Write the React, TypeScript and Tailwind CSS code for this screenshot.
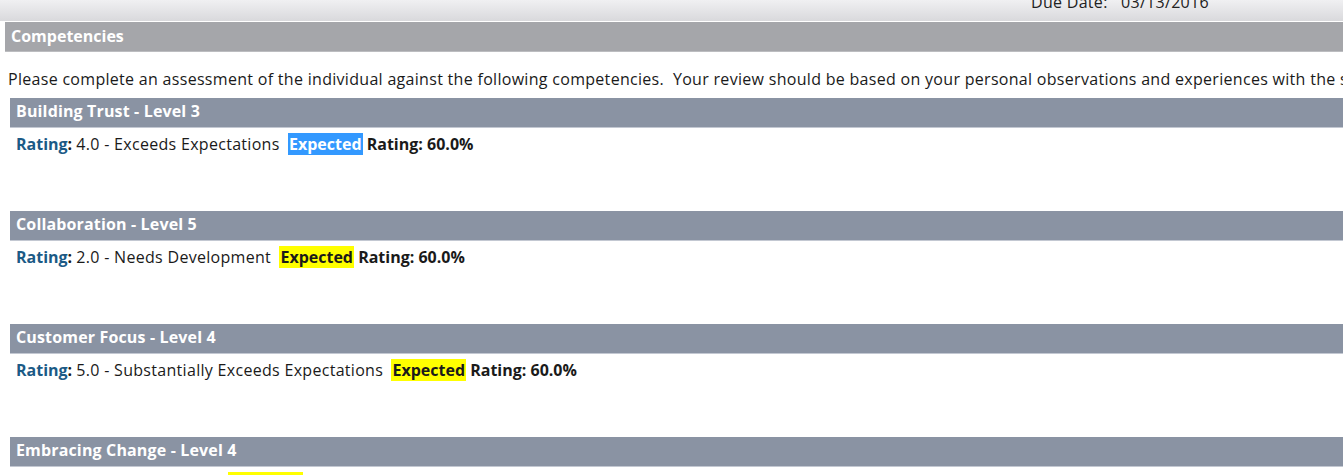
import React from 'react';

const items = [
  { title: 'Building Trust - Level 3', rating: '4.0 - Exceeds Expectations', selected: true },
  { title: 'Collaboration - Level 5', rating: '2.0 - Needs Development', selected: false },
  { title: 'Customer Focus - Level 4', rating: '5.0 - Substantially Exceeds Expectations', selected: false },
  { title: 'Embracing Change - Level 4', rating: '3.0 - Fully Effective', selected: false },
];

function Competency({ title, rating, selected }: { title: string; rating: string; selected: boolean }) {
  return (
    <div className="h-[113px]">
      <div className="ml-[10px] h-[30px] bg-[#8a93a3] border-b border-[#c3c8d2] text-white font-bold text-[16px] tracking-[0.15px] leading-[27px] pl-[6px]">
        {title}
      </div>
      <div className="pl-[16px] pt-[6px] text-[16px] leading-[20px] text-[#1a1a1a] whitespace-nowrap">
        <span className="font-bold text-[#1b5a86]">Rating</span>
        <span className="font-bold">:</span>{' '}
        <span className="tracking-[0.3px]">{rating}</span>&nbsp;{' '}
        <span
          className={
            selected
              ? 'font-bold bg-[#3399ff] text-white px-px'
              : 'font-bold bg-[#ffff00] px-px'
          }
        >
          Expected
        </span>{' '}
        <span className="font-bold">Rating: 60.0%</span>
      </div>
    </div>
  );
}

export default function App() {
  return (
    <div
      className="w-[1343px] h-[475px] overflow-hidden bg-white text-[#1a1a1a]"
      style={{ fontFamily: '"Open Sans", "DejaVu Sans", sans-serif' }}
    >
      <div className="h-[21px] bg-gradient-to-b from-[#f0f0f2] to-[#d9d9dc] relative overflow-hidden">
        <div className="absolute left-[1031px] top-[-10px] text-[16px] tracking-[0.3px] text-[#222] whitespace-pre">
          Due Date:   03/13/2016
        </div>
      </div>
      <div className="h-px bg-white" />
      <div className="ml-[5px] h-[30px] bg-[#a5a6aa] border-b border-[#bcbdc0] text-white font-bold text-[16px] leading-[28px] pl-[6px]">
        Competencies
      </div>
      <div className="pl-[8px] pt-[16px] pb-[8px] text-[16px] tracking-[0.3px] leading-[22px] whitespace-nowrap">
        Please complete an assessment of the individual against the following competencies.&nbsp; Your review should be based on your personal observations and experiences with the selected individual.
      </div>
      {items.map((it) => (
        <Competency key={it.title} {...it} />
      ))}
    </div>
  );
}
